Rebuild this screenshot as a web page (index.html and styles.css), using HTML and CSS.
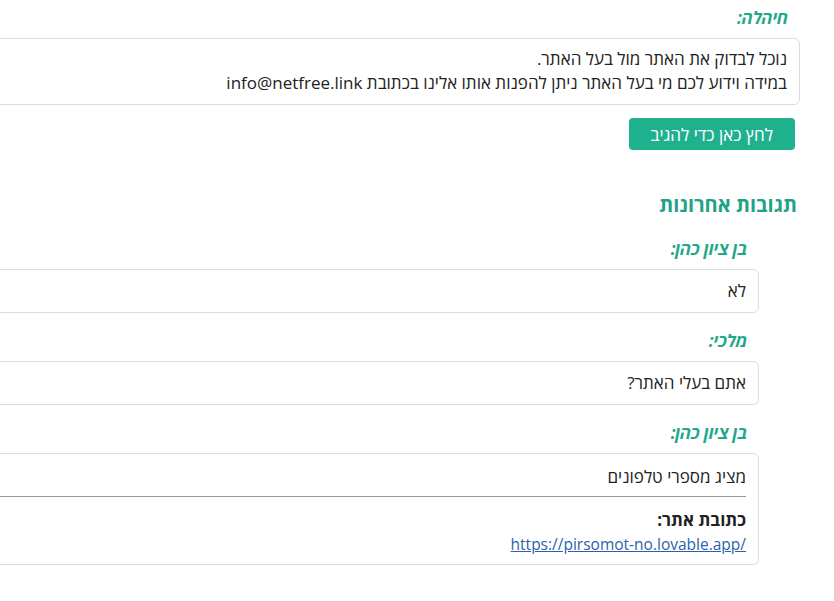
FILE: index.html
```html
<!DOCTYPE html>
<html lang="he" dir="rtl">
<head>
<meta charset="utf-8">
<title>תגובות</title>
<link rel="stylesheet" href="styles.css">
</head>
<body>
<main class="page">
  <section class="answer">
    <div class="author">חיהלה:</div>
    <div class="bubble wide">
      <p>נוכל לבדוק את האתר מול בעל האתר.</p>
      <p>במידה וידוע לכם מי בעל האתר ניתן להפנות אותו אלינו בכתובת info@netfree.link</p>
    </div>
    <button class="reply-btn" type="button">לחץ כאן כדי להגיב</button>
  </section>

  <section class="recent">
    <h2 class="recent-title">תגובות אחרונות</h2>
    <div class="comment">
      <div class="author">בן ציון כהן:</div>
      <div class="bubble"><p>לא</p></div>
    </div>
    <div class="comment">
      <div class="author">מלכי:</div>
      <div class="bubble"><p>אתם בעלי האתר?</p></div>
    </div>
    <div class="comment">
      <div class="author">בן ציון כהן:</div>
      <div class="bubble rich">
        <p class="first-line">מציג מספרי טלפונים</p>
        <hr class="sep">
        <p class="field-name">כתובת אתר:</p>
        <p><a href="#" class="site-link">https://pirsomot-no.lovable.app/</a></p>
      </div>
    </div>
  </section>
</main>
</body>
</html>
```
FILE: styles.css
```css
html {
  overflow-x: hidden;
}

body {
  margin: 0;
  background: #fff;
  color: #222;
  font-family: "Open Sans", "DejaVu Sans", sans-serif;
  font-size: 17px;
  line-height: 24px;
  overflow-x: hidden;
}

.page {
  width: 1100px;
  padding: 6px 34px 0 0;
}

p {
  margin: 0;
}

.author {
  color: #1fa88a;
  font-weight: 700;
  font-style: italic;
  font-size: 17px;
  padding-right: 12px;
  margin-bottom: 8px;
}

.bubble {
  border: 1px solid #dcdcdc;
  border-radius: 6px;
  padding: 9px 12px;
  background: #fff;
}

.answer .bubble {
  padding: 8px 12px 9px;
}

.bubble.rich {
  padding-bottom: 8px;
}

.reply-btn {
  margin: 13px 5px 0 0;
  background: #1fb18e;
  color: #fff;
  border: none;
  border-radius: 4px;
  font-family: inherit;
  font-size: 17px;
  height: 32px;
  padding: 0 22px;
  cursor: pointer;
}

.recent {
  margin-top: 38px;
}

.recent-title {
  margin: 0 0 15px;
  padding-right: 3px;
  color: #1fa386;
  font-size: 20px;
  font-weight: 700;
  line-height: 34px;
}

.comment {
  margin-right: 41px;
  margin-bottom: 16px;
}

.first-line {
  padding-top: 2px;
}

.sep {
  border: none;
  border-top: 1px solid #999;
  margin: 7px 0 11px;
}

.field-name {
  font-weight: 700;
}

.site-link {
  color: #2d5fad;
  font-size: 15.5px;
  direction: ltr;
  unicode-bidi: isolate;
}
```
